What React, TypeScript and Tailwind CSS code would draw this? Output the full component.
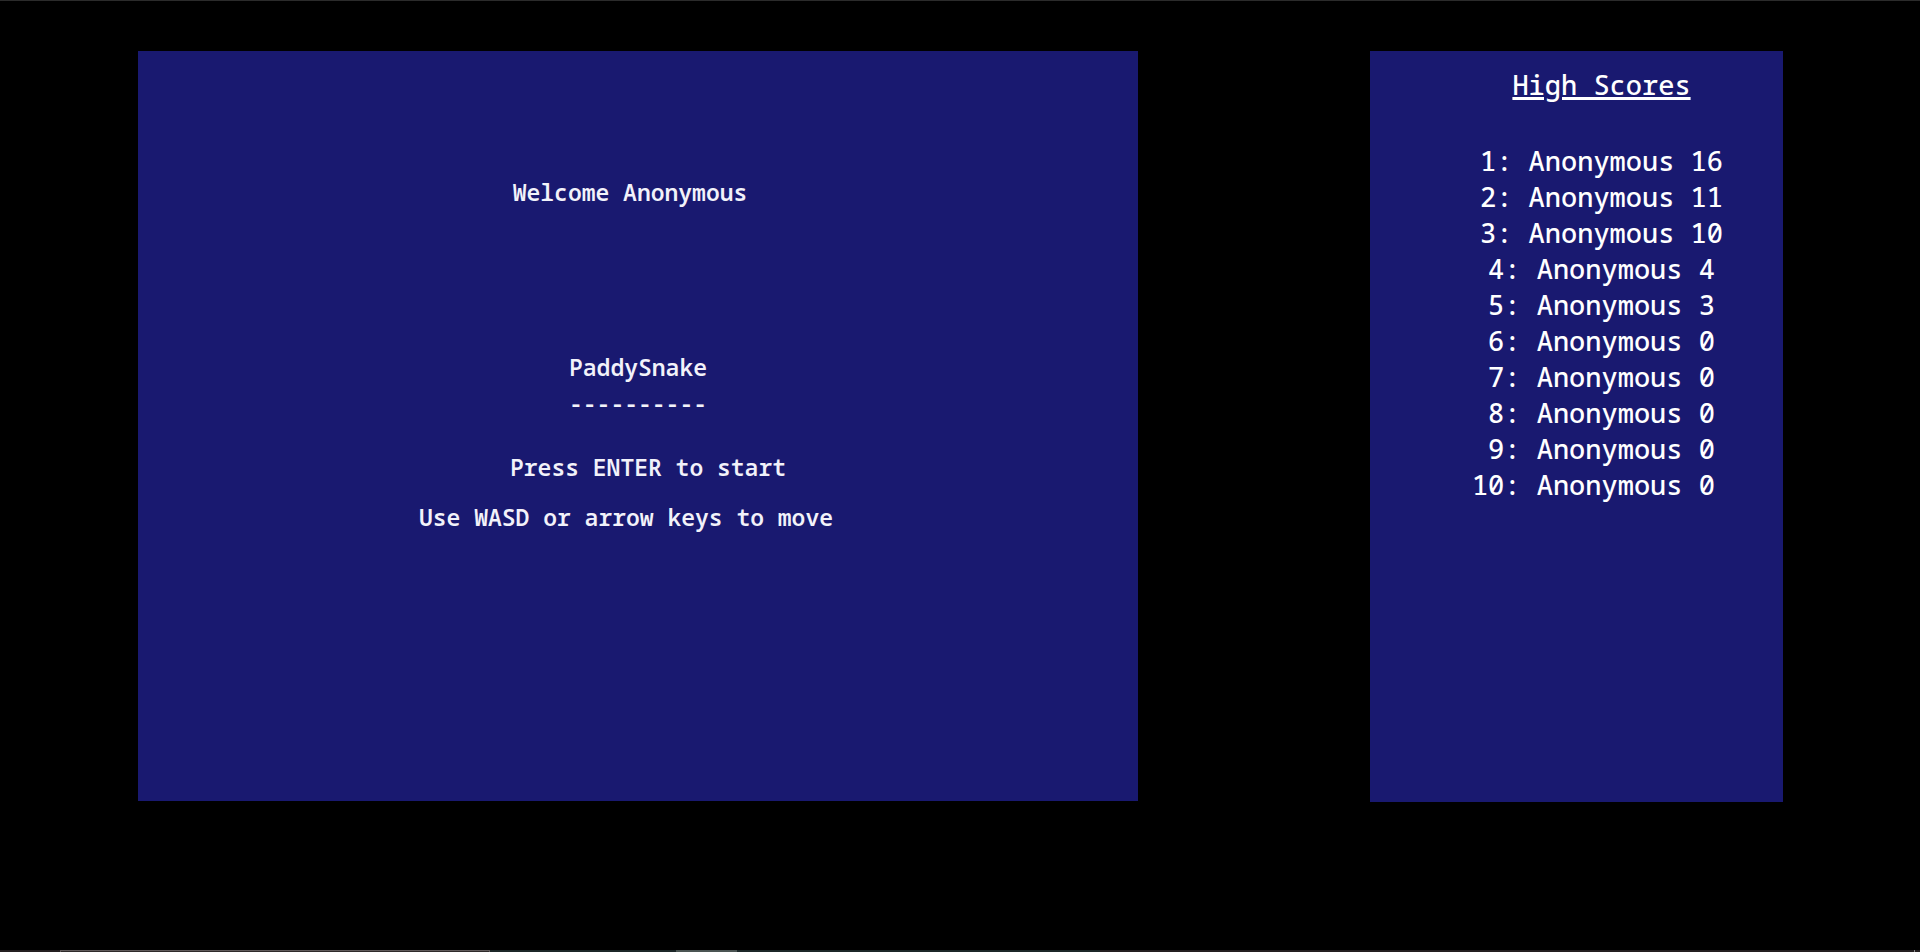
const scores = [
  { name: "Anonymous", score: "16" },
  { name: "Anonymous", score: "11" },
  { name: "Anonymous", score: "10" },
  { name: "Anonymous", score: "4" },
  { name: "Anonymous", score: "3" },
  { name: "Anonymous", score: "0" },
  { name: "Anonymous", score: "0" },
  { name: "Anonymous", score: "0" },
  { name: "Anonymous", score: "0" },
  { name: "Anonymous", score: "0\u00a0" },
];

function GameBoard() {
  return (
    <main className="flex h-[750px] w-[1000px] flex-col bg-[#191970] pt-[123px] text-center text-[23px] leading-9 font-semibold text-[#f2f2fa]">
      <p className="pr-4">Welcome Anonymous</p>
      <h1 className="mt-[139px]">PaddySnake</h1>
      <p>----------</p>
      <p className="mt-7 pl-5">Press ENTER to start</p>
      <p className="mt-[14px] pr-6">Use WASD or arrow keys to move</p>
    </main>
  );
}

function HighScores() {
  return (
    <aside className="h-[751px] w-[413px] bg-[#191970] pt-4 pl-[50px] text-center text-[27px] leading-9 font-medium text-white">
      <h2 className="underline decoration-[3px] underline-offset-2">High Scores</h2>
      <ol className="mt-10">
        {scores.map((entry, i) => (
          <li key={i}>
            {i + 1}: {entry.name} {entry.score}
          </li>
        ))}
      </ol>
    </aside>
  );
}

export default function App() {
  return (
    <div className="flex min-h-screen flex-col border-t border-[#2b2b2b] bg-black font-['Noto_Sans_Mono','DejaVu_Sans_Mono',monospace]">
      <div className="flex flex-1 items-start justify-between pt-[50px] pr-[137px] pl-[138px]">
        <GameBoard />
        <HighScores />
      </div>
      <footer className="flex h-[2px] bg-[#241f20]">
        <div className="w-[60px]" />
        <div className="w-[430px] border-x border-t border-[#5f5a5a] bg-[#2f2b2b]" />
        <div className="flex w-[610px] bg-[#1c2728] pl-[186px]">
          <div className="w-[61px] bg-[#4b5553]" />
        </div>
        <div className="mr-[5px] ml-auto w-px bg-[#8a8a8a]" />
      </footer>
    </div>
  );
}
